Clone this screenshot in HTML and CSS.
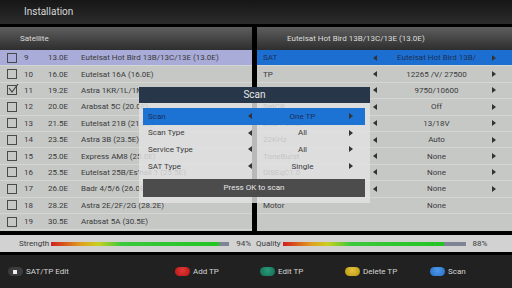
FILE: index.html
```html
<!DOCTYPE html>
<html>
  <head>
    <title>Installation</title>
    <link rel="stylesheet" href="styles.css">
  </head>
  <body>
    <div class="topbar">Installation</div>

    <div class="panels">
      <div class="panel left">
        <div class="head">Satellite</div>
        <div class="row sel"><span class="chk"></span><span class="num">9</span><span class="pos">13.0E</span><span class="name">Eutelsat Hot Bird 13B/13C/13E (13.0E)</span></div>
        <div class="row"><span class="chk"></span><span class="num">10</span><span class="pos">16.0E</span><span class="name">Eutelsat 16A (16.0E)</span></div>
        <div class="row"><span class="chk on"><svg width="12" height="12" viewBox="0 0 12 12"><path d="M2 5 L5 9 L11 1" fill="none" stroke="#444" stroke-width="1.2"/></svg></span><span class="num">11</span><span class="pos">19.2E</span><span class="name">Astra 1KR/1L/1M/1N (19.2E)</span></div>
        <div class="row"><span class="chk"></span><span class="num">12</span><span class="pos">20.0E</span><span class="name">Arabsat 5C (20.0E)</span></div>
        <div class="row"><span class="chk"></span><span class="num">13</span><span class="pos">21.5E</span><span class="name">Eutelsat 21B (21.5E)</span></div>
        <div class="row"><span class="chk"></span><span class="num">14</span><span class="pos">23.5E</span><span class="name">Astra 3B (23.5E)</span></div>
        <div class="row"><span class="chk"></span><span class="num">15</span><span class="pos">25.0E</span><span class="name">Express AM8 (25.0E)</span></div>
        <div class="row"><span class="chk"></span><span class="num">16</span><span class="pos">25.5E</span><span class="name">Eutelsat 25B/Es'hail 1 (25.5E)</span></div>
        <div class="row"><span class="chk"></span><span class="num">17</span><span class="pos">26.0E</span><span class="name">Badr 4/5/6 (26.0E)</span></div>
        <div class="row"><span class="chk"></span><span class="num">18</span><span class="pos">28.2E</span><span class="name">Astra 2E/2F/2G (28.2E)</span></div>
        <div class="row"><span class="chk"></span><span class="num">19</span><span class="pos">30.5E</span><span class="name">Arabsat 5A (30.5E)</span></div>
      </div>

      <div class="panel right">
        <div class="head">Eutelsat Hot Bird 13B/13C/13E (13.0E)</div>
        <div class="opt sel"><span>SAT</span><span class="la"></span><span class="val">Eutelsat Hot Bird 13B/</span><span class="ra"></span></div>
        <div class="opt"><span>TP</span><span class="la"></span><span class="val">12265 /V/ 27500</span><span class="ra"></span></div>
        <div class="opt"><span>LNB Type</span><span class="la"></span><span class="val">9750/10600</span><span class="ra"></span></div>
        <div class="opt"><span>SatCR</span><span class="la"></span><span class="val">Off</span><span class="ra"></span></div>
        <div class="opt"><span>LNB Power</span><span class="la"></span><span class="val">13/18V</span><span class="ra"></span></div>
        <div class="opt"><span>22KHz</span><span class="la"></span><span class="val">Auto</span><span class="ra"></span></div>
        <div class="opt"><span>ToneBurst</span><span class="la"></span><span class="val">None</span><span class="ra"></span></div>
        <div class="opt"><span>DiSEqC1.0</span><span class="la"></span><span class="val">None</span><span class="ra"></span></div>
        <div class="opt"><span>DiSEqC1.1</span><span class="la"></span><span class="val">None</span><span class="ra"></span></div>
        <div class="opt"><span>Motor</span><span></span><span class="val">None</span><span></span></div>
      </div>
    </div>

    <div class="signal">
      <div class="meter first">
        <span class="mlabel">Strength</span>
        <div class="bar" style="width: 178px"><div class="fill" style="width: 94%"></div></div>
        <span class="pct">94%</span>
      </div>
      <div class="meter">
        <span class="mlabel">Quality</span>
        <div class="bar" style="width: 183px"><div class="fill" style="width: 88%"></div></div>
        <span class="pct">88%</span>
      </div>
    </div>

    <div class="keys">
      <div class="key"><span class="btn edit"></span>SAT/TP Edit</div>
      <div class="key"><span class="btn red"></span>Add TP</div>
      <div class="key"><span class="btn green"></span>Edit TP</div>
      <div class="key"><span class="btn yellow"></span>Delete TP</div>
      <div class="key"><span class="btn blue"></span>Scan</div>
    </div>

    <!-- popup over the panels -->
    <div class="dialog">
      <div class="dtitle">Scan</div>
      <div class="dbody">
        <div class="drow sel"><span>Scan</span><span class="la"></span><span class="val">One TP</span><span class="ra"></span></div>
        <div class="drow"><span>Scan Type</span><span class="la"></span><span class="val">All</span><span class="ra"></span></div>
        <div class="drow"><span>Service Type</span><span class="la"></span><span class="val">All</span><span class="ra"></span></div>
        <div class="drow"><span>SAT Type</span><span class="la"></span><span class="val">Single</span><span class="ra"></span></div>
        <div class="dok">Press OK to scan</div>
      </div>
    </div>
  </body>
</html>
```

FILE: styles.css
```css
body {
  margin: 0;
  width: 512px;
  height: 288px;
  overflow: hidden;
  background-color: #000;
  font-family: Roboto, "Liberation Sans", sans-serif;
  font-size: 8px;
  color: #3a3a3a;
  position: relative;
}
.topbar {
  height: 24px;
  line-height: 24px;
  padding-left: 24px;
  font-size: 10px;
  color: #d8d8d8;
  background: linear-gradient(#161616, #2c2c2c);
}
.panels {
  margin-top: 3px;
  display: flex;
  gap: 5px;
  height: 204px;
}
.panel {
  background-color: #c6c8c6;
  overflow: hidden;
}
.left {
  width: 252px;
}
.right {
  flex: 1;
}
.head {
  height: 23px;
  line-height: 23px;
  color: #dcdcdc;
  background: linear-gradient(#5e5e5e, #2e2e2e);
}
.left .head {
  padding-left: 20px;
}
.right .head {
  padding-left: 30px;
}
.row,
.opt {
  height: 16.4px;
  box-sizing: border-box;
  border-bottom: 1px solid #d4d6d4;
  display: flex;
  align-items: center;
  white-space: nowrap;
}
.row.sel {
  background-color: #a9acd8;
}
.chk {
  width: 10px;
  height: 10px;
  border: 1px solid #4a4a4a;
  box-sizing: border-box;
  margin-left: 7px;
  position: relative;
}
.chk svg {
  position: absolute;
  left: -1px;
  top: -3px;
}
.num {
  margin-left: 7px;
  width: 24px;
}
.pos {
  width: 33px;
}
.opt {
  display: grid;
  grid-template-columns: 110px 8px 1fr 8px;
  padding: 0 12px 0 6px;
}
.opt.sel {
  background-color: #1c6fd0;
  color: #1b2f5a;
}
.val {
  text-align: center;
  overflow: hidden;
}
.la::before {
  content: "";
  display: block;
  border-style: solid;
  border-width: 3px 4px 3px 0;
  border-color: transparent #333 transparent transparent;
  width: 0;
}
.ra::before {
  content: "";
  display: block;
  border-style: solid;
  border-width: 3px 0 3px 4px;
  border-color: transparent transparent transparent #333;
  width: 0;
}
.signal {
  margin-top: 4px;
  height: 17px;
  background-color: #d2d2d2;
  display: flex;
}
.meter {
  width: 256px;
  display: flex;
  align-items: center;
}
.meter.first {
  padding-left: 19px;
  box-sizing: border-box;
}
.mlabel {
  margin-right: 2px;
}
.bar {
  height: 4px;
  background-color: #7d8494;
  flex: none;
}
.fill {
  height: 100%;
  background: linear-gradient(90deg, #d21e1e 0%, #e0a020 18%, #c8d020 28%, #3cc83c 42%, #22c422 100%);
}
.pct {
  margin-left: 7px;
}
.keys {
  margin-top: 3px;
  height: 33px;
  background-color: #212121;
  color: #d6d6d6;
  display: grid;
  grid-template-columns: 167px 85px 85px 85px 85px;
  padding-left: 8px;
  align-items: center;
}
.key {
  display: flex;
  align-items: center;
}
.btn {
  width: 15px;
  height: 9px;
  border-radius: 5px;
  margin-right: 3px;
}
.btn.edit {
  background-color: #3c3c3c;
  position: relative;
}
.btn.edit::after {
  content: "";
  position: absolute;
  left: 5px;
  top: 2.5px;
  width: 4px;
  height: 4px;
  background-color: #eee;
}
.btn.red {
  background: radial-gradient(circle at 50% 35%, #e03a3a, #b81414);
}
.btn.green {
  background: radial-gradient(circle at 50% 35%, #2a9a7a, #136b52);
}
.btn.yellow {
  background: radial-gradient(circle at 50% 35%, #e4c23a, #b89612);
}
.btn.blue {
  background: radial-gradient(circle at 50% 35%, #4a9ae8, #2a6fc8);
}
.dialog {
  position: absolute;
  left: 139px;
  top: 87px;
  width: 231px;
}
.dtitle {
  height: 16px;
  line-height: 16px;
  text-align: center;
  font-size: 10px;
  color: #e8e8e8;
  background-color: #283649;
}
.dbody {
  background-color: rgba(226, 226, 226, 0.82);
  padding: 5px 5px 6px 4px;
}
.drow {
  height: 16.6px;
  display: grid;
  grid-template-columns: 100px 8px 1fr 8px;
  padding: 0 8px 0 5px;
  align-items: center;
}
.drow.sel {
  background-color: #1c73d4;
  color: #1b2f5a;
}
.dok {
  margin-top: 5px;
  height: 18px;
  line-height: 18px;
  text-align: center;
  color: #e6e6e6;
  background-color: #4c4c4c;
}
```
